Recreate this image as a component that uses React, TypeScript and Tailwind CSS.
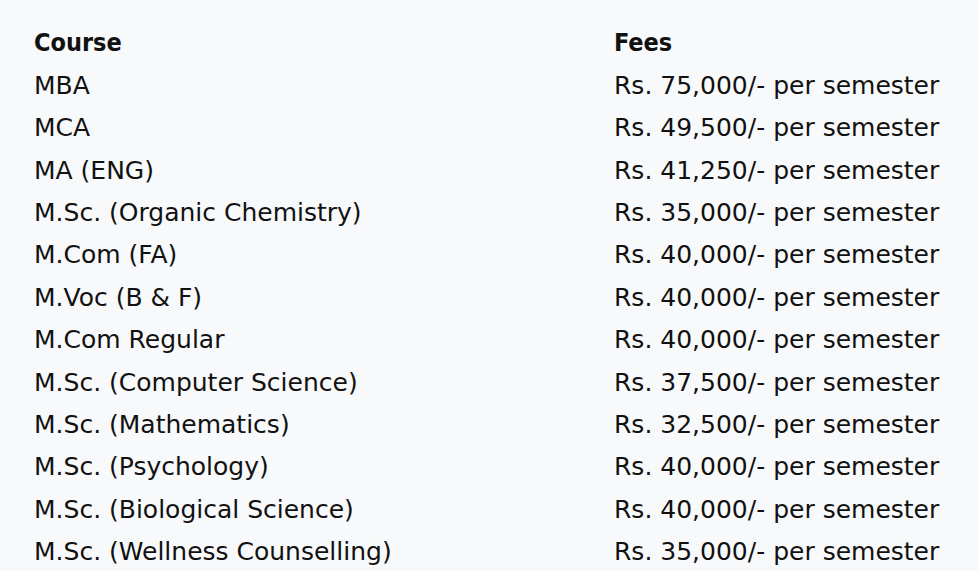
const rows: [string, string][] = [
  ['MBA', 'Rs. 75,000/- per semester'],
  ['MCA', 'Rs. 49,500/- per semester'],
  ['MA (ENG)', 'Rs. 41,250/- per semester'],
  ['M.Sc. (Organic Chemistry)', 'Rs. 35,000/- per semester'],
  ['M.Com (FA)', 'Rs. 40,000/- per semester'],
  ['M.Voc (B & F)', 'Rs. 40,000/- per semester'],
  ['M.Com Regular', 'Rs. 40,000/- per semester'],
  ['M.Sc. (Computer Science)', 'Rs. 37,500/- per semester'],
  ['M.Sc. (Mathematics)', 'Rs. 32,500/- per semester'],
  ['M.Sc. (Psychology)', 'Rs. 40,000/- per semester'],
  ['M.Sc. (Biological Science)', 'Rs. 40,000/- per semester'],
  ['M.Sc. (Wellness Counselling)', 'Rs. 35,000/- per semester'],
];

export default function App() {
  return (
    <div className="min-h-screen w-full bg-[#f8f9fb] pt-[22px] pl-[34px] font-['DejaVu_Sans',sans-serif] text-[25px] text-[#111]">
      <div className="grid grid-cols-[580px_1fr] auto-rows-[42.4px] items-center whitespace-nowrap">
        <div className="font-['DejaVu_Sans_Condensed','DejaVu_Sans',sans-serif] font-bold">Course</div>
        <div className="font-['DejaVu_Sans_Condensed','DejaVu_Sans',sans-serif] font-bold">Fees</div>
        {rows.map(([course, fee]) => (
          <div key={course} className="contents">
            <div>{course}</div>
            <div>{fee}</div>
          </div>
        ))}
      </div>
    </div>
  );
}
